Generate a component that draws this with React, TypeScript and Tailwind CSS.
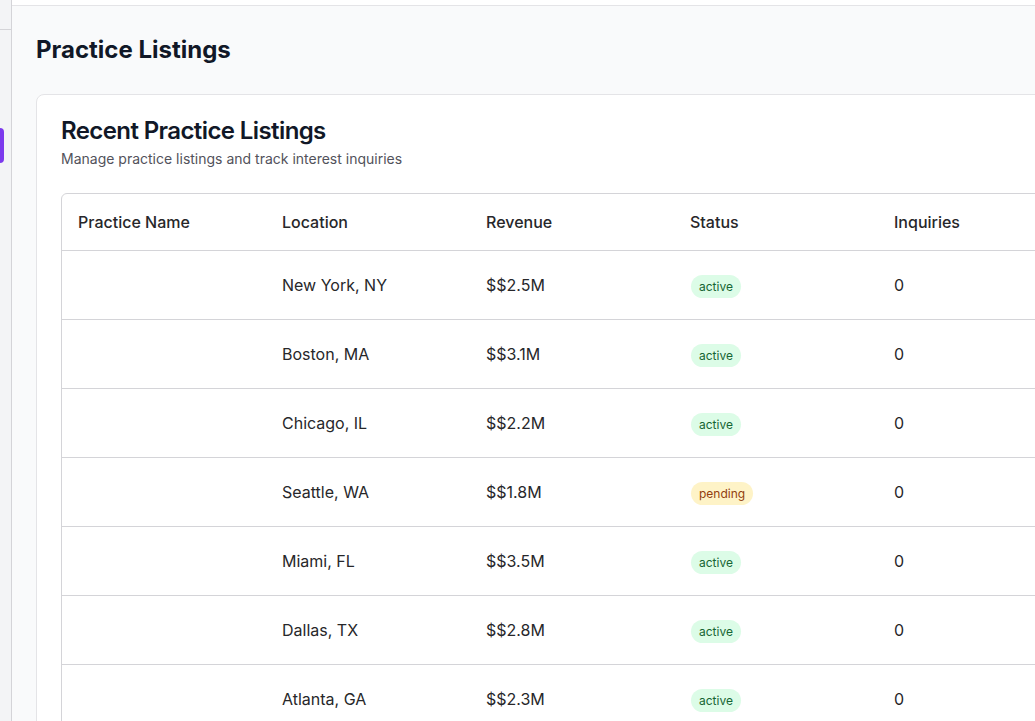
const listings = [
  { name: "", location: "New York, NY", revenue: "$$2.5M", status: "active", inquiries: 0 },
  { name: "", location: "Boston, MA", revenue: "$$3.1M", status: "active", inquiries: 0 },
  { name: "", location: "Chicago, IL", revenue: "$$2.2M", status: "active", inquiries: 0 },
  { name: "", location: "Seattle, WA", revenue: "$$1.8M", status: "pending", inquiries: 0 },
  { name: "", location: "Miami, FL", revenue: "$$3.5M", status: "active", inquiries: 0 },
  { name: "", location: "Dallas, TX", revenue: "$$2.8M", status: "active", inquiries: 0 },
  { name: "", location: "Atlanta, GA", revenue: "$$2.3M", status: "active", inquiries: 0 },
];

const StatusBadge = ({ status }: { status: string }) => {
  const styles =
    status === "pending"
      ? "bg-[#fef3c7] text-[#92400e]"
      : "bg-[#dcfce7] text-[#166534]";
  return (
    <div className="flex h-6 items-start">
      <span className={`h-[23px] translate-x-[1px] translate-y-[2px] rounded-full px-2 text-xs leading-[23px] ${styles}`}>
        {status}
      </span>
    </div>
  );
};

const App = () => {
  return (
    <div
      className="flex h-[721px] w-[1035px] overflow-hidden bg-[#f9fafb] text-[#111827]"
      style={{ fontFamily: "Inter, 'Noto Sans', sans-serif" }}
    >
      {/* sidebar (mostly off screen) */}
      <aside className="flex w-[12px] shrink-0 flex-col border-r border-[#d4d4d8] bg-[#f3f4f6]">
        <div className="h-[30px] border-b border-[#d4d4d8]"></div>
        <div className="mt-[98px] h-[35px] w-[4px] rounded-r-md bg-[#7c3aed]"></div>
      </aside>

      <div className="flex min-w-0 flex-1 flex-col">
        <header className="h-[6px] shrink-0 border-b border-[#e4e4e7] bg-white"></header>

        <main className="min-w-0 flex-1 p-6">
          <div className="mb-6 flex h-10 items-center justify-between">
            <h1 className="text-2xl font-bold text-[#111827]">Practice Listings</h1>
          </div>

          <div className="w-[1040px] rounded-lg border border-[#e4e4e7] bg-white">
            <div className="flex flex-col gap-1.5 p-6">
              <h2 className="text-2xl leading-none font-semibold tracking-tight text-[#111827]">
                Recent Practice Listings
              </h2>
              <p className="text-sm text-[#52525b]">Manage practice listings and track interest inquiries</p>
            </div>
            <div className="px-6 pb-6">
              <div className="overflow-hidden rounded-md border border-[#d4d4d8]">
                <table className="w-[1224px] table-fixed border-collapse text-left text-base leading-6">
                  <thead>
                    <tr className="border-b border-[#d4d4d8]">
                      <th className="w-[204px] px-4 py-4 font-medium text-[#27272a]">Practice Name</th>
                      <th className="w-[204px] px-4 py-4 font-medium text-[#27272a]">Location</th>
                      <th className="w-[204px] px-4 py-4 font-medium text-[#27272a]">Revenue</th>
                      <th className="w-[204px] px-4 py-4 font-medium text-[#27272a]">Status</th>
                      <th className="w-[204px] px-4 py-4 font-medium text-[#27272a]">Inquiries</th>
                      <th className="w-[204px] px-4 py-4"></th>
                    </tr>
                  </thead>
                  <tbody>
                    {listings.map((item, i) => (
                      <tr key={i} className="border-b border-[#d4d4d8] last:border-b-0">
                        <td className="px-4 py-[22px] text-[#27272a]">{item.name}</td>
                        <td className="px-4 py-[22px] text-[#27272a]">{item.location}</td>
                        <td className="px-4 py-[22px] text-[#27272a]">{item.revenue}</td>
                        <td className="px-4 py-[22px]">
                          <StatusBadge status={item.status} />
                        </td>
                        <td className="px-4 py-[22px] text-[#27272a]">{item.inquiries}</td>
                        <td className="px-4 py-[22px]"></td>
                      </tr>
                    ))}
                  </tbody>
                </table>
              </div>
            </div>
          </div>
        </main>
      </div>
    </div>
  );
};

export default App;
